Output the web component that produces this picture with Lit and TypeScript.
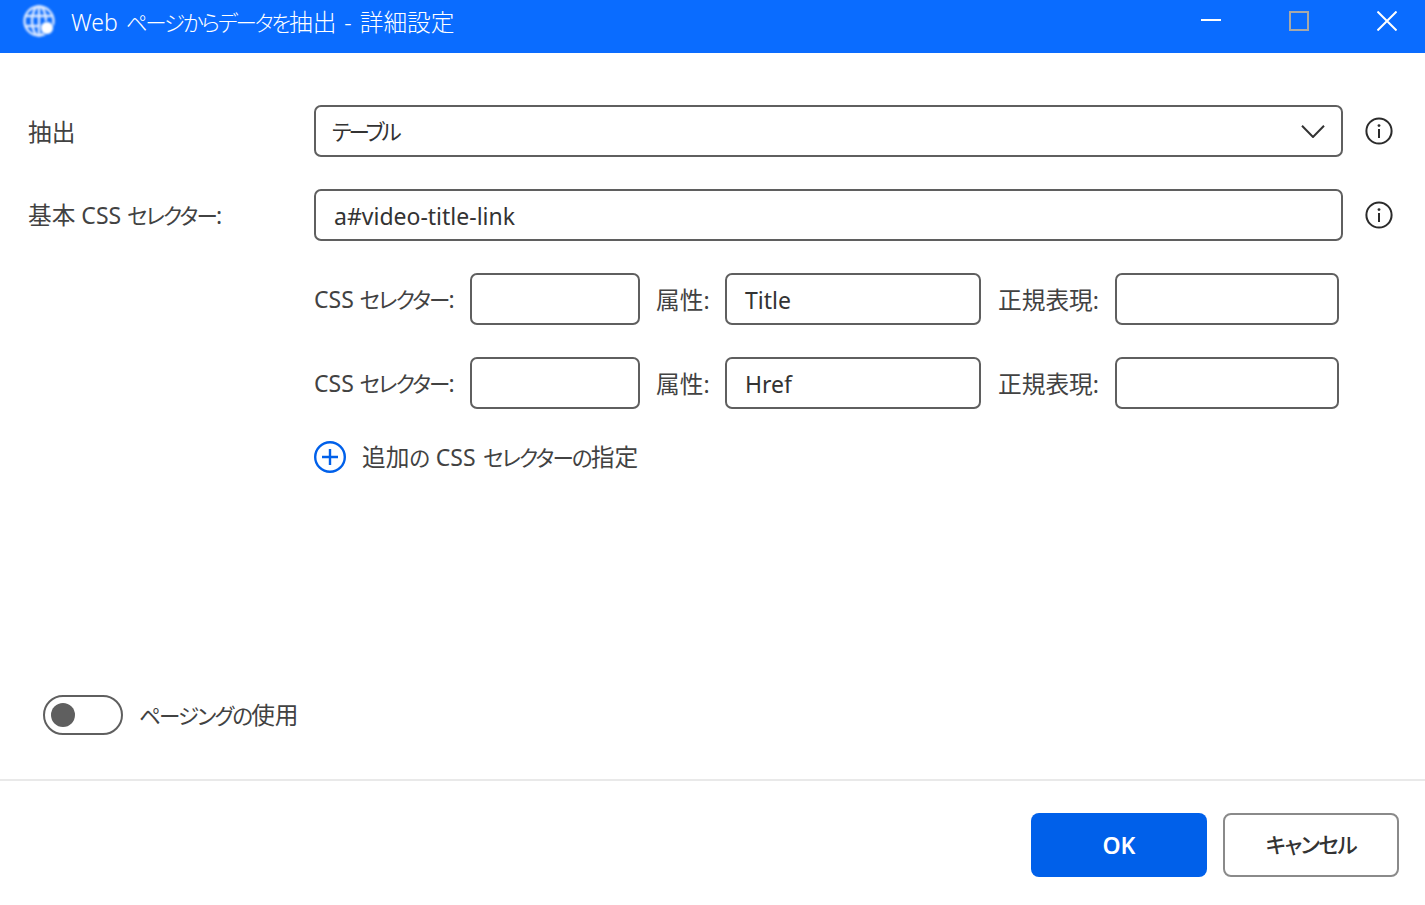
import { LitElement, html, css } from "lit";
import { customElement } from "lit/decorators.js";

const infoIcon = html`<svg class="info" width="28" height="28" viewBox="0 0 28 28" fill="none">
  <circle cx="14" cy="14" r="12.6" stroke="#2b2b2b" stroke-width="2"/>
  <rect x="13" y="12" width="2" height="9" fill="#2b2b2b"/>
  <circle cx="14" cy="8.6" r="1.4" fill="#2b2b2b"/>
</svg>`;

const k = (s: string) => html`<span class="k">${s}</span>`;
const h = (s: string) => html`<span class="h">${s}</span>`;

@customElement("app-root")
export class AppRoot extends LitElement {
  static styles = css`
    :host {
      display: flex;
      flex-direction: column;
      width: 1425px;
      height: 905px;
      background: #fff;
      overflow: hidden;
      font-family: "Noto Sans", "Noto Sans CJK JP", sans-serif;
      font-size: 23px;
      line-height: 34px;
      font-feature-settings: "palt";
      color: #424242;
    }
    .k { font-size: 21.5px; letter-spacing: -1.8px; }
    .h { font-size: 23.7px; }
    .tight .k { letter-spacing: -2.9px; }
    .titlebar {
      height: 53px;
      flex: none;
      background: #0a6cff;
      display: flex;
      align-items: flex-start;
      color: #fff;
    }
    .logo { margin: 4px 0 0 22px; filter: blur(0.8px); }
    .title {
      margin: 5px 0 0 15px;
      font-size: 23px;
      white-space: nowrap;
      font-weight: 300;
      word-spacing: 2px;
    }
    .title .k { letter-spacing: -2.2px; }
    .winbtns { margin-left: auto; display: flex; align-items: flex-start; }
    .winbtns svg { display: block; margin-top: 11px; }
    .winbtns svg:nth-child(1) { margin-right: 68px; }
    .winbtns svg:nth-child(2) { margin-right: 68px; }
    .winbtns svg:nth-child(3) { margin-right: 28px; }
    .form {
      flex: 1;
      padding: 52px 0 0 28px;
      display: flex;
      flex-direction: column;
    }
    .row { display: flex; align-items: center; height: 52px; margin-bottom: 32px; }
    .label { width: 286px; flex: none; white-space: nowrap; padding-top: 1px; }
    .field {
      box-sizing: border-box;
      height: 52px;
      border: 2px solid #5f5f5f;
      border-radius: 7px;
      display: flex;
      align-items: center;
      white-space: nowrap;
      color: #333;
      background: #fff;
    }
    .wide { width: 1029px; padding: 1px 18px 0; justify-content: space-between; }
    .wide.sel { padding: 0 16px; }
    .info { margin-left: 22px; flex: none; }
    .sub { padding-left: 286px; }
    .sublabel { white-space: nowrap; padding-top: 1px; }
    .css-label { width: 156px; flex: none; }
    .attr-label { width: 69px; flex: none; margin-left: 16px; }
    .regex-label { width: 117px; flex: none; margin-left: 17px; }
    .f170 { width: 170px; }
    .f256 { width: 256px; padding: 1px 18px 0; }
    .f224 { width: 224px; }
    .add {
      display: flex;
      align-items: center;
      margin-left: 286px;
      height: 32px;
      white-space: nowrap;
      word-spacing: 1.5px;
    }
    .add svg { margin-right: 16px; flex: none; }
    .toggle-row {
      margin-top: auto;
      display: flex;
      align-items: center;
      padding: 0 0 44px 15px;
    }
    .toggle {
      box-sizing: border-box;
      width: 80px;
      height: 40px;
      border: 2px solid #5f5f5f;
      border-radius: 20px;
      display: flex;
      align-items: center;
      padding-left: 6px;
      margin-right: 16px;
      flex: none;
    }
    .knob { width: 24px; height: 24px; border-radius: 50%; background: #5f5f5f; }
    .footer {
      flex: none;
      height: 126px;
      box-sizing: border-box;
      border-top: 2px solid #e9e9e9;
      display: flex;
      justify-content: flex-end;
      align-items: flex-start;
      padding: 32px 26px 0 0;
      gap: 16px;
    }
    .btn {
      box-sizing: border-box;
      width: 176px;
      height: 64px;
      border-radius: 8px;
      display: flex;
      align-items: center;
      justify-content: center;
      font-weight: 600;
      font-size: 23px;
    }
    .ok { background: #0060ea; color: #fff; }
    .cancel { border: 2px solid #8a8a8a; color: #333; background: #fff; font-weight: 500; }
    .cancel .k { letter-spacing: -1.4px; }
  `;

  private subRow(value: string) {
    return html`<div class="row sub">
      <span class="sublabel css-label">CSS ${k("セレクター")}:</span>
      <div class="field f170"></div>
      <span class="sublabel attr-label">${h("属性")}:</span>
      <div class="field f256">${value}</div>
      <span class="sublabel regex-label">${h("正規表現")}:</span>
      <div class="field f224"></div>
    </div>`;
  }

  render() {
    return html`
      <div class="titlebar">
        <svg class="logo" width="34" height="34" viewBox="0 0 34 34" fill="none" stroke="#dbe8ff" stroke-width="2.4">
          <circle cx="17" cy="17" r="14.5"/>
          <ellipse cx="17" cy="17" rx="7" ry="14.5"/>
          <path d="M3 12h28M3 22h28M17 2.5v29"/>
          <circle cx="25" cy="24" r="6.5" fill="#fff" stroke="#0a6cff" stroke-width="1"/>
        </svg>
        <div class="title">Web ${k("ページからデータを")}${h("抽出")} - ${h("詳細設定")}</div>
        <div class="winbtns">
          <svg width="20" height="20" viewBox="0 0 20 20">
            <rect x="0" y="8" width="20" height="2" fill="#fff"/>
          </svg>
          <svg width="20" height="20" viewBox="0 0 20 20" fill="none">
            <rect x="1" y="1" width="18" height="18" stroke="#a8a8a8" stroke-width="2"/>
          </svg>
          <svg width="20" height="20" viewBox="0 0 20 20" fill="none">
            <path d="M0.5 0.5L19.5 19.5M19.5 0.5L0.5 19.5" stroke="#fff" stroke-width="2"/>
          </svg>
        </div>
      </div>

      <div class="form">
        <div class="row">
          <span class="label">${h("抽出")}</span>
          <div class="field wide sel tight">
            <span>${k("テーブル")}</span>
            <svg width="24" height="14" viewBox="0 0 24 14" fill="none">
              <path d="M1 1.8L12 13L23 1.8" stroke="#333" stroke-width="2"/>
            </svg>
          </div>
          ${infoIcon}
        </div>
        <div class="row">
          <span class="label">${h("基本")} CSS ${k("セレクター")}:</span>
          <div class="field wide">a#video-title-link</div>
          ${infoIcon}
        </div>
        ${this.subRow("Title")}
        ${this.subRow("Href")}
        <div class="add">
          <svg width="32" height="32" viewBox="0 0 32 32" fill="none" stroke="#0060ea" stroke-width="2.4">
            <circle cx="16" cy="16" r="14.8"/>
            <path d="M16 8v16M8 16h16"/>
          </svg>
          <span>${h("追加")}${k("の")} CSS ${k("セレクターの")}${h("指定")}</span>
        </div>
        <div class="toggle-row">
          <div class="toggle"><div class="knob"></div></div>
          <span class="tg">${k("ページングの")}${h("使用")}</span>
        </div>
      </div>

      <div class="footer">
        <div class="btn ok">OK</div>
        <div class="btn cancel">${k("キャンセル")}</div>
      </div>
    `;
  }
}
